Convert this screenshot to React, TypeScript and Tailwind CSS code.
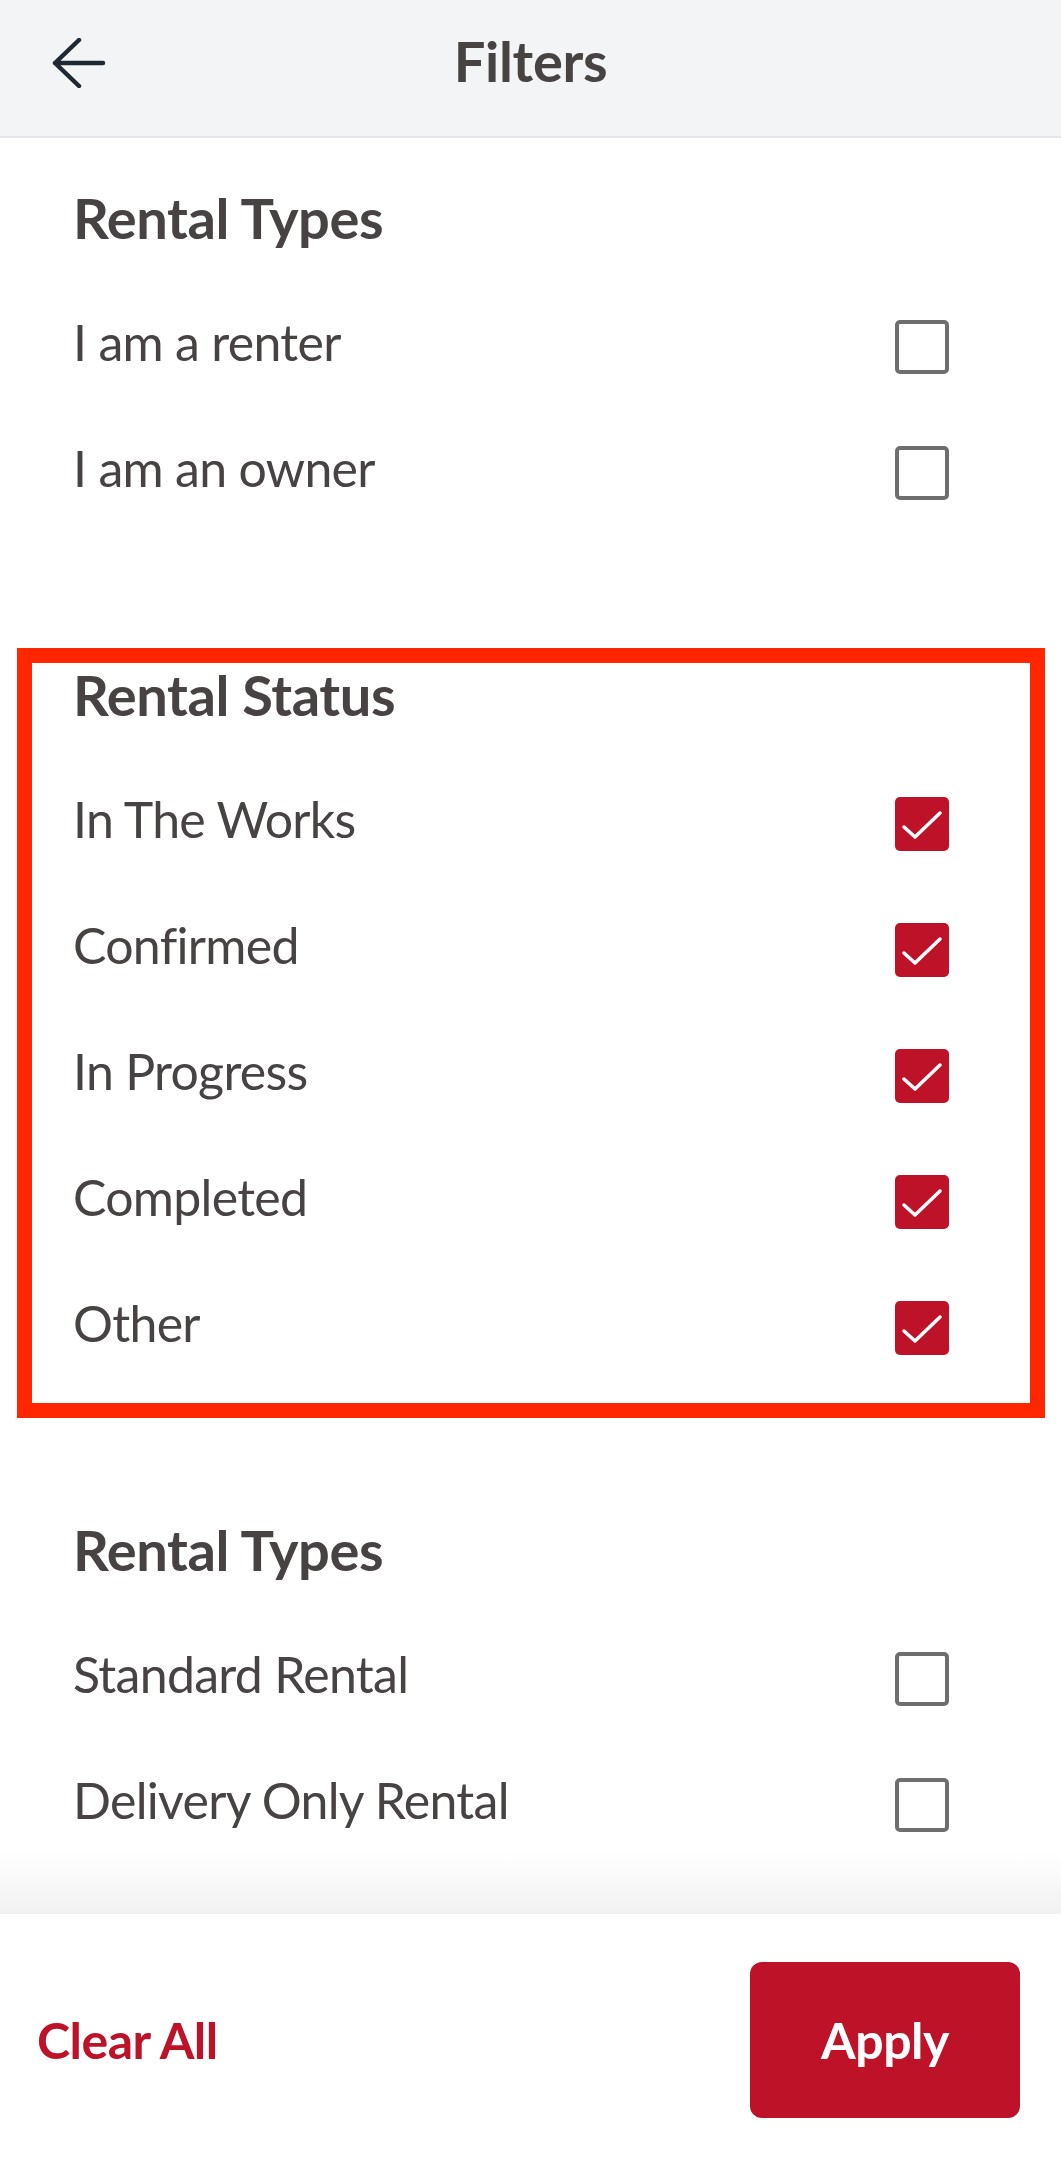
import React, { useState } from "react";

type Option = { id: string; label: string; checked: boolean };
type Section = { id: string; title: string; highlighted?: boolean; options: Option[] };

const initialSections: Section[] = [
  {
    id: "role",
    title: "Rental Types",
    options: [
      { id: "renter", label: "I am a renter", checked: false },
      { id: "owner", label: "I am an owner", checked: false },
    ],
  },
  {
    id: "status",
    title: "Rental Status",
    highlighted: true,
    options: [
      { id: "works", label: "In The Works", checked: true },
      { id: "confirmed", label: "Confirmed", checked: true },
      { id: "progress", label: "In Progress", checked: true },
      { id: "completed", label: "Completed", checked: true },
      { id: "other", label: "Other", checked: true },
    ],
  },
  {
    id: "type",
    title: "Rental Types",
    options: [
      { id: "standard", label: "Standard Rental", checked: false },
      { id: "delivery", label: "Delivery Only Rental", checked: false },
    ],
  },
];

const Checkbox = ({ checked, onClick }: { checked: boolean; onClick: () => void }) => (
  <button
    onClick={onClick}
    className={
      checked
        ? "w-[54px] h-[54px] rounded-[5px] bg-[#be1229] flex items-center justify-center"
        : "w-[54px] h-[54px] rounded-[5px] border-[4px] border-[#6e6e6e] bg-white"
    }
  >
    {checked && (
      <svg width="54" height="54" viewBox="0 0 54 54" fill="none">
        <path
          d="M9 30 L20 40 L45 16"
          stroke="white"
          strokeWidth="3.5"
          strokeLinecap="round"
          strokeLinejoin="round"
        />
      </svg>
    )}
  </button>
);

const App: React.FC = () => {
  const [sections, setSections] = useState(initialSections);

  const toggle = (sectionId: string, optionId: string) => {
    setSections((prev) =>
      prev.map((s) =>
        s.id !== sectionId
          ? s
          : {
              ...s,
              options: s.options.map((o) => (o.id === optionId ? { ...o, checked: !o.checked } : o)),
            }
      )
    );
  };

  const clearAll = () =>
    setSections((prev) =>
      prev.map((s) => ({ ...s, options: s.options.map((o) => ({ ...o, checked: false })) }))
    );

  return (
    <main className="w-[1061px] h-[2159px] bg-white flex flex-col font-['Lato','Liberation_Sans',sans-serif] text-[#474343]">
      {/* header */}
      <div className="h-[138px] shrink-0 bg-[#f3f4f6] border-b-2 border-[#e6e7ea] flex items-center">
        <button className="ml-[52px] mt-[-10px]">
          <svg width="54" height="50" viewBox="0 0 54 50" fill="none">
            <path
              d="M3 25 H51 M27 2 L3 25 L27 48"
              stroke="#1f2933"
              strokeWidth="4.5"
              strokeLinecap="round"
              strokeLinejoin="round"
            />
          </svg>
        </button>
        <div className="flex-1 text-center font-bold text-[56px] tracking-[-0.3px] pr-[106px] mt-[-14px]">
          Filters
        </div>
      </div>

      {/* filter list */}
      <div className="h-[1715px] overflow-hidden flex flex-col gap-[115px] pt-[48px]">
        {sections.map((section) => (
          <section
            key={section.id}
            className={
              section.highlighted
                ? "ml-[32px] mr-[31px] pl-[41px] pr-[81px] pb-[12px] outline-solid outline-[15px] outline-[#ff2600]"
                : "ml-[32px] mr-[31px] pl-[41px] pr-[81px] pb-[12px]"
            }
          >
            <h2 className="font-bold text-[56px] tracking-[-0.4px] leading-[64px] mb-[34px]">
              {section.title}
            </h2>
            {section.options.map((option) => (
              <div key={option.id} className="h-[126px] flex items-center justify-between">
                <span className="text-[50px] tracking-[-0.7px] pb-[10px]">{option.label}</span>
                <Checkbox checked={option.checked} onClick={() => toggle(section.id, option.id)} />
              </div>
            ))}
          </section>
        ))}
      </div>

      {/* footer */}
      <div className="h-[61px] shrink-0 bg-linear-to-b from-white to-[#f1f1f1]" />
      <div className="h-[245px] shrink-0 bg-white flex items-center justify-between pl-[37px] pr-[41px] pt-[7px]">
        <button onClick={clearAll} className="font-bold text-[50px] tracking-[-0.5px] text-[#be1229]">
          Clear All
        </button>
        <button className="w-[270px] h-[156px] rounded-[12px] bg-[#be1229] text-white font-bold text-[50px] tracking-[-0.5px]">
          Apply
        </button>
      </div>
    </main>
  );
};

export default App;
